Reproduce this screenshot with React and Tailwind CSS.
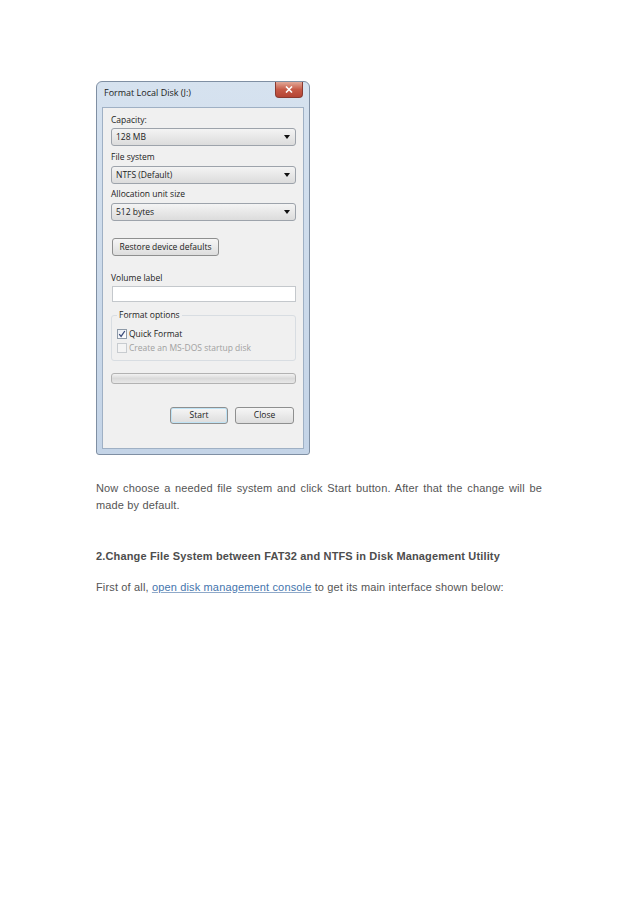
import React from 'react';

const ui = { fontFamily: '"Open Sans", "Noto Sans", sans-serif' };
const body = { fontFamily: '"Liberation Sans", Arial, sans-serif' };

function Combo({ value, className = '' }) {
  return (
    <div
      className={`flex items-center justify-between h-[18px] rounded-[3px] border border-[#9da3ab] bg-gradient-to-b from-[#f4f4f4] to-[#dcdcdc] pl-[4px] pr-[5px] text-[8.5px] text-[#222] ${className}`}
    >
      <span>{value}</span>
      <svg width="6" height="4" viewBox="0 0 6 4">
        <path d="M0 0h6L3 4z" fill="#111" />
      </svg>
    </div>
  );
}

function Button({ children, className = '' }) {
  return (
    <div
      className={`flex items-center justify-center rounded-[3px] border border-[#8e8f8f] bg-gradient-to-b from-[#f6f6f6] to-[#dddddd] text-[8.5px] text-[#222] ${className}`}
    >
      {children}
    </div>
  );
}

function FormatDialog() {
  return (
    <div
      style={ui}
      className="w-[214px] h-[374px] rounded-t-[6px] rounded-b-[3px] border border-[#7f8fa3] bg-gradient-to-b from-[#d6e2ef] to-[#c4d4e7] flex flex-col px-[5px] pb-[5px]"
    >
      {/* title bar */}
      <div className="h-[25px] flex items-start justify-between">
        <span className="mt-[4px] ml-[2px] text-[9px] text-[#222]">Format Local Disk (J:)</span>
        <div className="w-[28px] h-[16px] mr-[1px] rounded-b-[4px] border border-t-0 border-[#8a3a30] bg-gradient-to-b from-[#e0a898] via-[#c65a47] to-[#b44535] flex items-center justify-center">
          <svg width="8" height="7" viewBox="0 0 8 7">
            <path d="M1 0.5l6 6M7 0.5l-6 6" stroke="#fff" strokeWidth="1.6" />
          </svg>
        </div>
      </div>

      {/* client area */}
      <div className="flex-1 border border-[#9fb0c4] bg-[#f0f0f0] flex flex-col pl-[8px] pr-[7px] pt-[6px]">
        <div className="h-[12px] leading-[12px] text-[8.5px] text-[#222]">Capacity:</div>
        <Combo value="128 MB" className="mt-[2px]" />
        <div className="mt-[5px] h-[12px] leading-[12px] text-[8.5px] text-[#222]">File system</div>
        <Combo value="NTFS (Default)" className="mt-[3px]" />
        <div className="mt-[4px] h-[12px] leading-[12px] text-[8.5px] text-[#222]">Allocation unit size</div>
        <Combo value="512 bytes" className="mt-[3px]" />

        <Button className="mt-[17px] ml-[1px] w-[107px] h-[18px]">Restore device defaults</Button>

        <div className="mt-[16px] h-[12px] leading-[12px] text-[8.5px] text-[#222]">Volume label</div>
        <div className="mt-[2px] ml-[1px] h-[16px] border border-[#c4c8cc] bg-white" />

        {/* group box */}
        <div className="mt-[13px] h-[46px] rounded-[3px] border border-[#d8dde2] relative flex flex-col pl-[5px]">
          <span className="absolute -top-[7px] left-[5px] px-[2px] bg-[#f0f0f0] text-[8.5px] leading-[12px] text-[#222]">
            Format options
          </span>
          <div className="mt-[12px] flex items-center gap-[2px] h-[12px]">
            <div className="w-[10px] h-[10px] border border-[#8e9aa8] bg-gradient-to-br from-[#e8ecf2] to-white flex items-center justify-center">
              <svg width="8" height="8" viewBox="0 0 8 8">
                <path d="M1.2 4.2l1.9 2.2L6.8 1" fill="none" stroke="#3b4c7a" strokeWidth="1.3" />
              </svg>
            </div>
            <span className="text-[8.5px] text-[#222]">Quick Format</span>
          </div>
          <div className="mt-[2px] flex items-center gap-[2px] h-[12px]">
            <div className="w-[10px] h-[10px] border border-[#c8ccd0] bg-[#f4f4f4]" />
            <span className="text-[8.5px] text-[#a0a0a0]">Create an MS-DOS startup disk</span>
          </div>
        </div>

        {/* progress bar */}
        <div className="mt-[12px] h-[11px] rounded-[3px] border border-[#b2b2b2] bg-gradient-to-b from-[#f2f2f2] via-[#dadada] to-[#e8e8e8]" />

        <div className="mt-[23px] flex justify-end gap-[7px] pr-[2px]">
          <Button className="w-[58px] h-[17px] border-[#4f9fc8] shadow-[inset_0_0_0_1px_#bfe3f5]">Start</Button>
          <Button className="w-[59px] h-[17px]">Close</Button>
        </div>
      </div>
    </div>
  );
}

export default function App() {
  return (
    <div className="min-h-screen bg-white pt-[81px] pl-[96px]" style={body}>
      <FormatDialog />

      <div className="w-[446px] text-[11px] tracking-[0.15px] text-[#555]">
        <p className="mt-[25px] leading-[17px] text-justify">
          Now choose a needed file system and click Start button. After that the change will be made by default.
        </p>

        <h2 className="mt-[34px] leading-[17px] font-bold text-[#4d4d4d]">
          2.Change File System between FAT32 and NTFS in Disk Management Utility
        </h2>

        <p className="mt-[14px] leading-[17px]">
          First of all,{' '}
          <a href="#" className="text-[#4575ad] underline decoration-[#8fa9c9]">open disk management console</a>{' '}
          to get its main interface shown below:
        </p>
      </div>
    </div>
  );
}
